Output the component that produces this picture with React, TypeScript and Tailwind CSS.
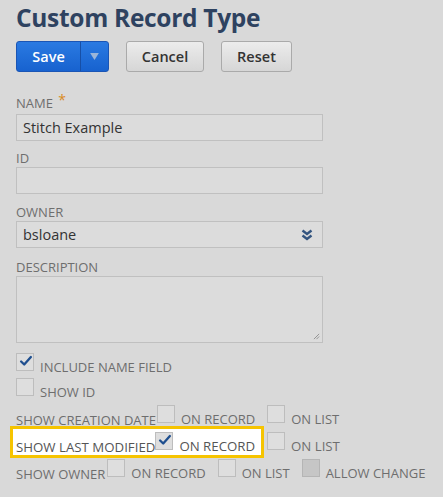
import React from "react";

const font = { fontFamily: '"Open Sans", "Noto Sans", sans-serif' };

function Check({ checked, disabled }: { checked?: boolean; disabled?: boolean }) {
  return (
    <span
      className={`relative inline-block h-[18px] w-[18px] shrink-0 border ${
        disabled ? "border-[#b5b5b5] bg-[#c6c6c6]" : "border-[#bdbdbd] bg-[#dedede]"
      }`}
    >
      {checked && (
        <svg viewBox="0 0 18 18" className="absolute left-[1px] top-[-1px] h-[16px] w-[16px]">
          <path d="M3.5 9.5 L7 13 L14.5 4.5" fill="none" stroke="#1f4f8f" strokeWidth="2.6" strokeLinecap="round" strokeLinejoin="round" />
        </svg>
      )}
    </span>
  );
}

function Label({ children, className = "" }: { children: React.ReactNode; className?: string }) {
  return <div className={`text-[13px] leading-[12px] text-[#6e6e6e] uppercase ${className}`}>{children}</div>;
}

function Field({ children, className = "" }: { children?: React.ReactNode; className?: string }) {
  return (
    <div className={`mt-[3px] flex h-[27px] w-[307px] items-center border border-[#c0c0c0] bg-[#dcdcdc] px-[6px] text-[14.5px] text-[#333] ${className}`}>
      {children}
    </div>
  );
}

function Opt({ label, checked, disabled }: { label: string; checked?: boolean; disabled?: boolean }) {
  return (
    <span className="flex items-end">
      <Check checked={checked} disabled={disabled} />
      <span className="ml-[6px] translate-y-[1px] leading-[10px]">{label}</span>
    </span>
  );
}

export default function App() {
  return (
    <div style={font} className="h-[497px] w-[443px] overflow-hidden bg-[#d9d9d9] pl-[16px] pt-[3px]">
      <h1 className="text-[24.5px] font-bold leading-[30px] tracking-[-0.3px] text-[#2e4260]">Custom Record Type</h1>

      <div className="mt-[8px] flex items-center">
        <div className="flex h-[31px] w-[93px] overflow-hidden rounded-[3px] border border-[#1a55b5] bg-gradient-to-b from-[#2a7ae2] to-[#1762cf] text-[14.5px] font-semibold text-white">
          <span className="flex w-[63px] items-center justify-center">Save</span>
          <span className="flex flex-1 items-center justify-center border-l border-[#174fa6]">
            <svg viewBox="0 0 10 8" className="h-[7px] w-[9px]">
              <path d="M0 0 H10 L5 8 Z" fill="#9bb5d8" />
            </svg>
          </span>
        </div>
        <button className="ml-[17px] flex h-[31px] w-[78px] items-center justify-center rounded-[3px] border border-[#aaaaaa] bg-gradient-to-b from-[#ececec] to-[#d6d6d6] text-[14.5px] font-semibold text-[#333]">
          Cancel
        </button>
        <button className="ml-[17px] flex h-[31px] w-[71px] items-center justify-center rounded-[3px] border border-[#aaaaaa] bg-gradient-to-b from-[#ececec] to-[#d6d6d6] text-[14.5px] font-semibold text-[#333]">
          Reset
        </button>
      </div>

      <div className="mt-[25px]">
        <Label>
          Name <span className="relative -top-[3px] ml-[2px] text-[14px] text-[#d98a1e]">*</span>
        </Label>
        <Field className="!mt-[5px]">Stitch Example</Field>
      </div>

      <div className="mt-[11px]">
        <Label>ID</Label>
        <Field />
      </div>

      <div className="mt-[12px]">
        <Label>Owner</Label>
        <Field className="justify-between">
          <span>bsloane</span>
          <svg viewBox="0 0 12 12" className="mr-[3px] h-[12px] w-[12px]">
            <path d="M1.5 1.5 L6 5 L10.5 1.5" fill="none" stroke="#345580" strokeWidth="2.4" />
            <path d="M1.5 6.5 L6 10 L10.5 6.5" fill="none" stroke="#345580" strokeWidth="2.4" />
          </svg>
        </Field>
      </div>

      <div className="mt-[13px]">
        <Label>Description</Label>
        <div className="relative mt-[3px] h-[67px] w-[307px] border border-[#c0c0c0] bg-[#dcdcdc]">
          <svg viewBox="0 0 8 8" className="absolute bottom-[2px] right-[2px] h-[7px] w-[7px]">
            <path d="M7 1 L1 7 M7 4 L4 7" stroke="#8a8a8a" strokeWidth="1" />
          </svg>
        </div>
      </div>

      <div className="mt-[10px] text-[13px] text-[#6e6e6e] uppercase">
        <div className="flex items-end">
          <Opt label="Include name field" checked />
        </div>
        <div className="mt-[7px] flex items-end">
          <Opt label="Show ID" />
        </div>

        <div className="mt-[9px] flex items-end">
          <span className="translate-y-[2px] leading-[10px]">Show creation date</span>
          <span className="ml-[1px] flex items-end gap-[12px]">
            <Opt label="On record" />
            <Opt label="On list" />
          </span>
        </div>

        <div className="mt-[3px] flex items-end">
          <div className="-ml-[6px] flex h-[32px] w-[254px] items-end border-[3px] border-[#f6c400] bg-white pb-[5px] pl-[3px] text-[13.25px] text-[#555]">
            <span className="translate-y-[2px] leading-[10px]">Show last modified</span>
            <Opt label="On record" checked />
          </div>
          <span className="mb-[8px] ml-[3px] text-[13.25px]">
            <Opt label="On list" />
          </span>
        </div>

        <div className="mt-[1px] flex items-end">
          <span className="translate-y-[2px] leading-[10px]">Show owner</span>
          <span className="ml-[2px] flex items-end gap-[12px]">
            <Opt label="On record" />
            <Opt label="On list" />
            <Opt label="Allow change" disabled />
          </span>
        </div>
      </div>
    </div>
  );
}
